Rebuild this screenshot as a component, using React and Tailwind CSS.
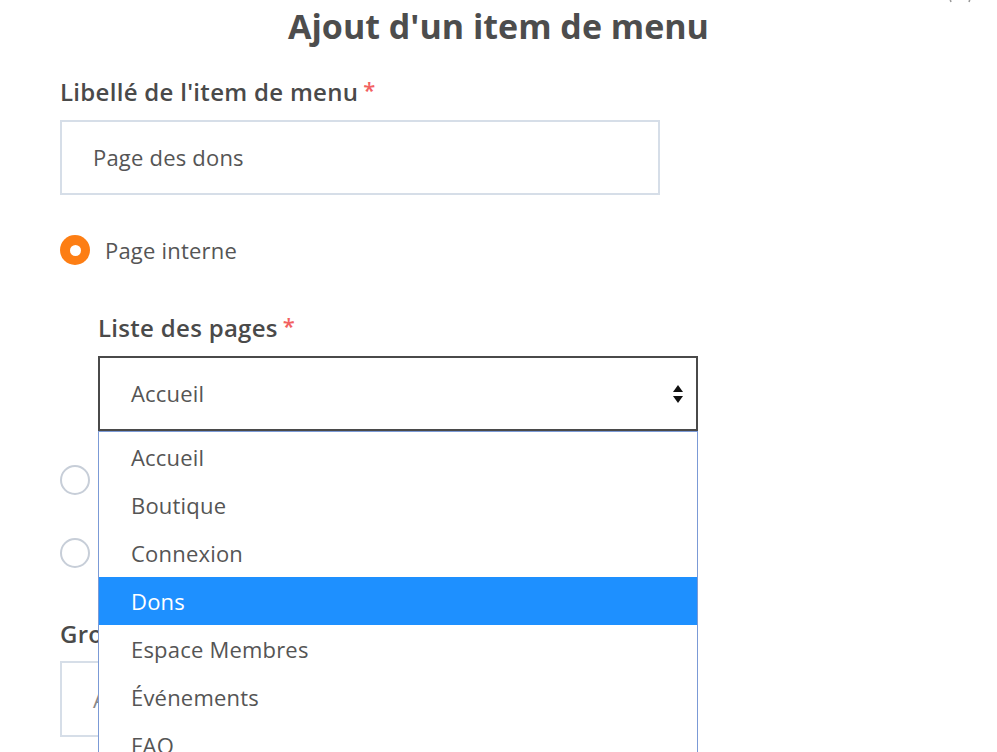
const PAGES = ['Accueil', 'Boutique', 'Connexion', 'Dons', 'Espace Membres', 'Événements', 'FAQ', 'Galerie'];

function Radio({ checked }) {
  if (checked) {
    return (
      <span className="flex h-[30px] w-[30px] shrink-0 items-center justify-center rounded-full bg-[#fd7e14]">
        <span className="h-[11px] w-[11px] rounded-full bg-white" />
      </span>
    );
  }
  return <span className="h-[30px] w-[30px] shrink-0 rounded-full border-2 border-[#c7ced8] bg-white" />;
}

function Required() {
  return <span className="ml-[5px] align-top text-[22px] leading-[22px] text-[#f26161]">*</span>;
}

export default function App() {
  const selected = 'Dons';

  return (
    <div
      className="relative h-[752px] w-[997px] overflow-hidden bg-white text-[#4a4a4a]"
      style={{ fontFamily: '"Open Sans", Lato, sans-serif' }}
    >
      {/* fermeture (coupée en haut) */}
      <svg className="absolute left-[946px] top-[-22px]" width="28" height="26" viewBox="0 0 28 26">
        <path d="M5 2 Q1 13 5 24" fill="none" stroke="#9a9a9a" strokeWidth="1.5" />
        <path d="M23 2 Q27 13 23 24" fill="none" stroke="#9a9a9a" strokeWidth="1.5" />
      </svg>

      <h1 className="pt-[4px] text-center text-[34px] font-bold leading-[44px] text-[#4d4d4d]">
        Ajout d'un item de menu
      </h1>

      <div className="px-[60px] pt-[30px]">
        {/* Libellé */}
        <label className="block text-[24px] font-semibold leading-[28px] tracking-[0.3px]">
          Libellé de l'item de menu
          <Required />
        </label>
        <div className="mt-[14px] flex h-[75px] w-[600px] items-center border-2 border-[#d6dee8] pl-[31px] text-[22px] tracking-[0.2px] text-[#555]">
          Page des dons
        </div>

        {/* Page interne */}
        <div className="mt-[40px] flex h-[30px] items-center gap-[15px]">
          <Radio checked />
          <span className="text-[22px] leading-[30px] tracking-[0.2px] text-[#555]">Page interne</span>
        </div>

        <div className="pl-[38px] pt-[49px]">
          <label className="block text-[24px] font-semibold leading-[28px] tracking-[0.3px]">
            Liste des pages
            <Required />
          </label>

          <div className="relative mt-[14px] w-[600px]">
            <div className="flex h-[75px] items-center justify-between border-2 border-[#4a4a4a] pl-[31px] pr-[12px] text-[22px] tracking-[0.2px] text-[#555]">
              <span>Accueil</span>
              <svg width="12" height="20" viewBox="0 0 12 20">
                <path d="M6 1 L11 8 L1 8 Z" fill="#111" />
                <path d="M1 12 L11 12 L6 19 Z" fill="#111" />
              </svg>
            </div>

            {/* liste déroulante ouverte */}
            <ul className="absolute left-0 top-[75px] z-10 w-[600px] border border-[#7b9ad6] bg-white pt-[1px]">
              {PAGES.map((p) => (
                <li
                  key={p}
                  className={`flex h-[48px] items-center pl-[32px] text-[22px] tracking-[0.2px] ${
                    p === selected ? 'bg-[#1e90ff] text-white' : 'text-[#555]'
                  }`}
                >
                  {p}
                </li>
              ))}
            </ul>
          </div>
        </div>

        {/* autres types (cachés par la liste) */}
        <div className="mt-[34px] flex h-[30px] items-center gap-[15px]">
          <Radio />
          <span className="text-[20px] leading-[30px] text-[#555]">Page externe</span>
        </div>
        <div className="mt-[43px] flex h-[30px] items-center gap-[15px]">
          <Radio />
          <span className="text-[20px] leading-[30px] text-[#555]">Aucun lien</span>
        </div>

        <label className="mt-[52px] block text-[24px] font-semibold leading-[28px] tracking-[0.3px]">
          Groupe parent
        </label>
        <div className="mt-[13px] flex h-[76px] w-[600px] items-center border-2 border-[#d6dee8] pl-[31px] text-[22px] text-[#888]">
          Aucun
        </div>
      </div>
    </div>
  );
}
